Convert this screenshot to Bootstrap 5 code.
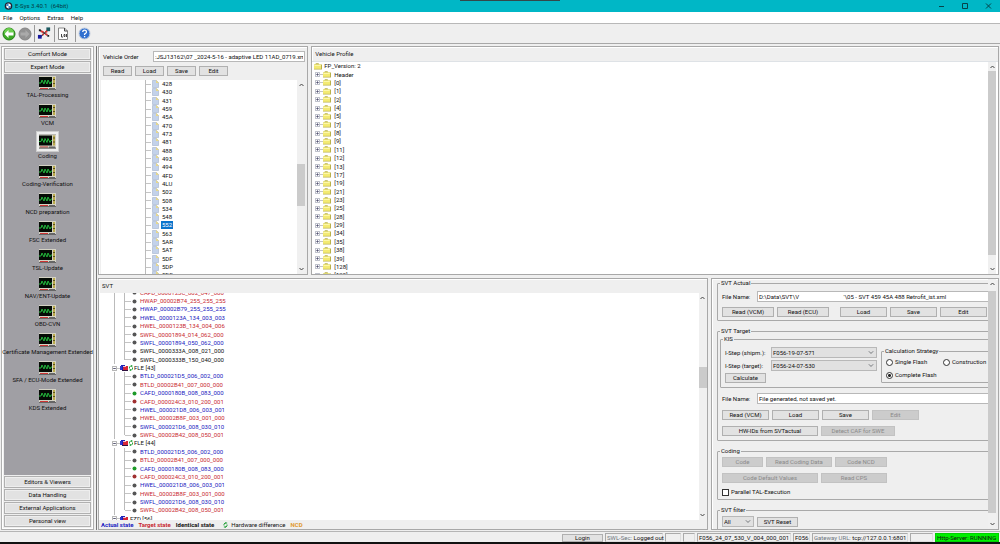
<!DOCTYPE html>
<html lang="en">
<head>
<meta charset="utf-8">
<meta name="viewport" content="width=device-width, initial-scale=1">
<title>E-Sys 3.40.1 (64bit)</title>
<link href="https://cdn.jsdelivr.net/npm/bootstrap@5.3.0/dist/css/bootstrap.min.css" rel="stylesheet">
<style>
body{font:6px/8px Roboto,"Noto Sans",sans-serif;color:#111;background:#efefef;height:100vh;overflow:hidden}
svg{display:block;flex:none}
.titlebar{background:#00b7c6;height:12px;color:#053a40}
.tab-top{height:1px;width:100px;background:#33484a;left:46%;top:0}
.menus{height:11px;background:#fff;gap:7px;padding-left:3px}
.menus a{color:#111;text-decoration:none}
.tools{height:21px;border-top:1px solid #b8b8b8;border-bottom:1px solid #a8a8a8;padding-left:2px;gap:2px}
.tools button{border:0;background:none;padding:0}
.tools .rule{width:1px;height:17px;background:#999}
.work{padding:2px 1px 1px}
.side{flex:0 0 93px;min-width:0;border:1px solid #b0b0b0;background:#efefef;padding:1px 2px;box-shadow:inset 0 0 0 1px #fff;margin-right:2px}
.side .modes{gap:1px;padding-bottom:1px}
.side .modes.low{padding-top:1px}
.side .pool{background:#a09fa4;padding-top:2px}
.tool-item{border:0;background:none;padding:0 0 5px;display:flex;flex-direction:column;align-items:center;white-space:nowrap;color:#111;line-height:8px;flex:none}
.tool-item svg{margin-bottom:1px}
.tool-item.on svg{border:2px solid #eee;outline:1px solid #ccc;background:#a09fa4;padding:0;width:21px;height:19px}
.btn.key{--bs-btn-padding-x:0;--bs-btn-padding-y:0;--bs-btn-font-size:6px;--bs-btn-line-height:8px;--bs-btn-border-radius:0;--bs-btn-bg:#e2e2e2;--bs-btn-border-color:#b0b0b0;--bs-btn-color:#111;--bs-btn-disabled-bg:#ccc;--bs-btn-disabled-border-color:#c2c2c2;--bs-btn-disabled-color:#8a8a8a;--bs-btn-disabled-opacity:1;height:10px;flex:none;white-space:nowrap}
.side .key{height:12px;box-shadow:inset 0 0 0 1px #eee}
.w-s{width:29px}.w-m{width:41px}.w-l{width:47px}.w-xl{width:52px}.w-2{width:66px}.w-3{width:74px}.w-4{width:96px}
.panes{gap:3px;border-left:1px solid #777;padding-left:1px}
.pane{border:1px solid #a8a8a8;box-shadow:inset 1px 1px #fff;min-width:0;overflow:hidden}
.row-top{flex:229 1 0}.row-low{flex:251 1 0}
.order{flex:209 1 0}.profile{flex:688 1 0}.svt{flex:610 1 0}.ctl{flex:287 1 0}
.cap{height:14px;padding:3px 3px 0}
.sheet{background:#fff;min-height:0}
.rows{display:grid;grid-auto-rows:1fr;min-width:0}
.clip{overflow:hidden;min-width:0;background:#fff}
.order .rows{height:calc(100% + 5px)}
.profile .rows{height:calc(100% + 5px)}
.svt .rows{height:calc(100% + 8px);margin-top:-5px}
.node{display:flex;align-items:center;min-height:0;height:100%;white-space:pre;line-height:8px}
.vline{width:1px;align-self:stretch;background:#bbb;flex:none}
.vline.end{height:50%;align-self:flex-start}
.hline{height:1px;background:#c4c4c4;flex:none}
.pick{background:#0a74cc;color:#fff;padding:0 1px;margin-left:-1px}
.sb{flex:0 0 8px;background:#f0f0f0;display:flex;flex-direction:column;padding:3px 0}
.profile .sb,.ctl .sb{margin-right:2px}
.sb svg{margin:0 auto}
.sb i{display:block;flex-basis:0}
.sb .thumb{background:#cbcbcb}
.form-control.box,.form-select.box{font-size:6px;line-height:8px;height:11px;min-height:0;padding:0 1px;border:1px solid #b8b8b8;border-radius:0;color:#111;min-width:0}
.form-select.box{background-color:#e1e1e1;background-size:6px 5px;background-position:right 2px center;padding-right:10px}
fieldset.grp{border:1px solid #a9a9a9;border-radius:1px;padding:0 4px}
fieldset.grp>legend{float:none;width:auto;margin:0 0 0 -2px;padding:0 1px;font-size:6px;line-height:8px}
.scroll{flex:1 1 0;min-width:0;overflow:hidden;padding-left:5px}
.groups{width:calc(100% + 12px);display:flex;flex-direction:column;gap:6px}
.line{display:flex;align-items:center;white-space:nowrap}
.lab{flex:0 0 35px}.lab-i{flex:0 0 46px}
.form-check-input.tick{width:7px;height:7px;margin:0 2px 0 0;border:1px solid #333;flex:none;background-image:none}
.form-check-input.tick[type=checkbox]{border-radius:0}
.form-check-input.tick:checked{background:#fff radial-gradient(circle,#222 0 1px,#fff 2px);border-color:#333}
.gap3{gap:3px}
.mt5{margin-top:5px}.mt6{margin-top:6px}
.calc{flex:1}
.legend-bar{height:9px;gap:5px;padding:0 2px;line-height:9px;background:#efefef}
.blue{color:#2020c0}.red{color:#c82830}
.status{height:11px;border-top:1px solid #b5b5b5;gap:2px;padding:1px 1px 0 0;line-height:8px;white-space:nowrap}
.cell{border:1px solid #aaa;border-right-color:#ddd;border-bottom-color:#ddd;padding:0 1px;height:9px;line-height:8px}
.status .key{height:8px;--bs-btn-line-height:6px}
.run{background:#00f000;border-color:#00d000}
.edge{height:2px;background:#111}
</style>
</head>
<body class="d-flex flex-column">
<svg width="0" height="0" class="position-absolute" aria-hidden="true">
<symbol id="scope" viewBox="0 0 17 14"><path fill="#d4d2c4" d="M0 0h17v14H0z"/><path fill="#050b05" d="M0 1h13v10H0z"/><path fill="#b9aa4c" d="M14 1h2v10h-2z"/><path fill="#5a5220" d="M14 3h2v1h-2zm0 4h2v1h-2z"/><path d="M0 7h2l1-3 2 4 1-4 2 4 1-4 2 4 1-2h1" fill="none" stroke="#23b43b"/><path fill="#c33" d="M1 12h8v1H1z"/><path fill="#666" d="M10 12h6v1h-6zM0 13h17v1H0z"/></symbol>
<symbol id="doc" viewBox="0 0 7 8"><path fill="#c3d2ea" stroke="#a3b2cb" stroke-width=".6" d="M.5.5h4l2 2v5h-6z"/><path fill="#e8d888" d="M4 0l3 3H4z"/></symbol>
<symbol id="folder" viewBox="0 0 8 7"><path fill="#b9b04a" d="M0 1.5h1L2 .3h2.500l.8 1.200H8v5H0z"/><path fill="#f3ea72" d="M0 1.500h7v4.300H0z"/><path fill="#fffbb8" d="M.5 1.800h6.200v1H.5z"/></symbol>
<symbol id="plus" viewBox="0 0 5 5"><path fill="#fff" stroke="#a4aab8" stroke-width=".8" d="M.4.4h4.200v4.200H.4z"/><path stroke="#446" stroke-width=".7" d="M1.200 2.500h2.600M2.500 1.200v2.600"/></symbol>
<symbol id="minus" viewBox="0 0 5 5"><path fill="#fff" stroke="#999" stroke-width=".8" d="M.4.4h4.200v4.200H.4z"/><path stroke="#335" stroke-width=".8" d="M1.200 2.500h2.600"/></symbol>
<symbol id="swap" viewBox="0 0 4 6"><path d="M.5 3.500V2L1.500 1H2.500M3.500 2.500V4L2.500 5h-1" fill="none" stroke="#2aa33e"/><path fill="#159a2c" d="M2 0l2 1-2 1zM2 4L0 5l2 1z"/></symbol>
<symbol id="ecu" viewBox="0 0 9 6"><path fill="#1c22b8" d="M1 0h4v5H1z"/><path fill="#3038d0" d="M0 1h2v4H0z"/><path fill="#d82838" d="M4 1h4v4H3V3z"/><path fill="#f2c6cc" d="M3 1h3v1H3z"/><path fill="#301040" d="M2 5h6v1H2z"/></symbol>
<symbol id="up" viewBox="0 0 5 4"><path d="M.5 3l2-2 2 2" fill="none" stroke="#444"/></symbol>
<symbol id="down" viewBox="0 0 5 4"><path d="M.5 1l2 2 2-2" fill="none" stroke="#444"/></symbol>
</svg>

<header class="titlebar d-flex align-items-center position-relative flex-shrink-0">
<div class="tab-top position-absolute"></div>
<svg class="ms-1" width="9" height="8" viewBox="0 0 9 8"><circle cx="4.500" cy="4" r="3.800" fill="#223"/><circle cx="4.500" cy="4" r="2.400" fill="#fff"/><path fill="#3987c8" d="M4.500 1.600A2.400 2.400 0 0 0 2.100 4h2.400zM4.500 4v2.400A2.400 2.400 0 0 0 6.900 4z"/></svg>
<span style="white-space:pre;padding-left:2px">E-Sys 3.40.1  (64bit)</span>
<svg class="ms-auto me-2" width="54" height="8" viewBox="0 0 54 8" fill="none" stroke="#06434a"><path d="M1 4.500h5M24.500 1.500h5v5h-5zM48 1.500l5 5m0-5l-5 5"/></svg>
</header>
<nav class="menus d-flex align-items-center flex-shrink-0"><a href="#">File</a><a href="#">Options</a><a href="#">Extras</a><a href="#">Help</a></nav>
<div class="tools d-flex align-items-center flex-shrink-0">
<button aria-label="Back"><svg width="14" height="14" viewBox="0 0 14 14"><circle cx="7" cy="7" r="6" fill="#3cab25" stroke="#247b16"/><path fill="#6bcf4e" d="M2 6a5 5 0 0 1 10 0z"/><path fill="#fff" d="M2.500 7l4-4v2.500h5v3h-5V11z"/></svg></button>
<button aria-label="Forward"><svg width="14" height="14" viewBox="0 0 14 14"><circle cx="7" cy="7" r="6" fill="#929292" stroke="#858585"/><path fill="#aaa" d="M11.500 7l-4-4v2.500h-5v3h5V11z"/></svg></button>
<span class="rule"></span>
<button aria-label="Connection"><svg width="15" height="15" viewBox="0 0 16 15"><path d="M3 12L12 3M3 4l8 5" stroke="#333" stroke-width="1.200"/><path fill="#16189c" d="M1 9h4v4H1z"/><path fill="#1b5960" d="M10 1h4v4h-4z"/><path d="M4 5l3 1M9 6l2-1M6 9l1-1M9 8l2 1" stroke="#d33" stroke-width="2" fill="none"/><path fill="#222" d="M2 3h2v2H2zm9 6h2v2h-2z"/></svg></button>
<span class="rule"></span>
<button aria-label="Log"><svg width="12" height="14" viewBox="0 0 12 14"><path d="M1.500 1h6l3 3v8.500h-9z" fill="#fff" stroke="#888"/><path d="M7.500 1v3h3M4.500 7v3h1.500M7 7.500h1v2H7zM9.500 7v3" fill="none" stroke="#444"/></svg></button>
<span class="rule ms-1"></span>
<button aria-label="Help"><svg width="13" height="13" viewBox="0 0 13 13"><circle cx="6.500" cy="6.500" r="5.500" fill="#2f6fd0" stroke="#c4cede"/><path d="M4.700 5q.1-1.800 1.900-1.800T8.500 5q0 1-1.900 2v1M6.600 9v1.300" fill="none" stroke="#fff" stroke-width="1.300"/></svg></button>
</div>

<main class="work d-flex flex-grow-1" style="min-height:0">
<aside class="side d-flex flex-column">
<div class="modes d-flex flex-column"><button class="btn key">Comfort Mode</button><button class="btn key">Expert Mode</button></div>
<div class="pool flex-grow-1 d-flex flex-column align-items-center" id="pool"></div>
<div class="modes low d-flex flex-column"><button class="btn key">Editors &amp; Viewers</button><button class="btn key">Data Handling</button><button class="btn key">External Applications</button><button class="btn key">Personal view</button></div>
</aside>

<div class="panes d-flex flex-column flex-grow-1" style="min-width:0">
<div class="row-top d-flex gap3" style="min-height:0">
<section class="pane order d-flex flex-column">
<div class="line ps-1 pt-1" style="padding-right:2px"><label for="vo" style="flex:0 0 50px">Vehicle Order</label><input id="vo" class="form-control box" value=":JSJ13162\07 _2024-5-16 - adaptive LED 11AD_0719.xml"></div>
<div class="line gap3 px-1 py-1"><button class="btn key w-s">Read</button><button class="btn key w-s">Load</button><button class="btn key w-s">Save</button><button class="btn key w-s">Edit</button></div>
<div class="sheet d-flex flex-grow-1" style="margin:0 2px"><div class="clip flex-grow-1"><div class="rows" id="orders"></div></div>
<div class="sb"><svg width="5" height="4"><use href="#up"/></svg><i style="flex-grow:76"></i><i class="thumb" style="flex-grow:42"></i><i style="flex-grow:61"></i><svg width="5" height="4"><use href="#down"/></svg></div></div>
</section>
<section class="pane profile d-flex flex-column">
<div class="cap">Vehicle Profile</div>
<div class="sheet d-flex flex-grow-1 border-top"><div class="clip flex-grow-1"><div class="rows" id="profiles"></div></div>
<div class="sb"><svg width="5" height="4"><use href="#up"/></svg><i style="flex-grow:2"></i><i class="thumb" style="flex-grow:184"></i><i style="flex-grow:12"></i><svg width="5" height="4"><use href="#down"/></svg></div></div>
</section>
</div>

<div class="row-low d-flex gap3" style="min-height:0">
<section class="pane svt d-flex flex-column">
<div class="cap">SVT</div>
<div class="sheet d-flex flex-grow-1"><div class="clip flex-grow-1"><div class="rows" id="svts"></div></div>
<div class="sb"><svg width="5" height="4"><use href="#up"/></svg><i style="flex-grow:66"></i><i class="thumb" style="flex-grow:21"></i><i style="flex-grow:125"></i><svg width="5" height="4"><use href="#down"/></svg></div></div>
<div class="legend-bar line"><b class="blue">Actual state</b><b class="red">Target state</b><b>Identical state</b><span class="line gap3 ps-1"><svg width="5" height="6"><use href="#swap"/></svg>Hardware difference</span><b style="color:#e09a30">NCD</b></div>
</section>

<section class="pane ctl d-flex">
<div class="scroll"><form class="groups">
<fieldset class="grp" style="padding-bottom:3px"><legend>SVT Actual</legend>
<div class="line mt-1"><label class="lab" for="fa">File Name:</label><input id="fa" class="form-control box" value="D:\Data\SVT\V                              '\05 - SVT 459 45A 488 Retrofit_ist.xml"></div>
<div class="line gap3 mt5"><button type="button" class="btn key w-xl">Read (VCM)</button><button type="button" class="btn key w-xl">Read (ECU)</button><button type="button" class="btn key w-l ms-2">Load</button><button type="button" class="btn key w-l">Save</button><button type="button" class="btn key w-l">Edit</button></div>
</fieldset>
<fieldset class="grp" style="padding-bottom:4px"><legend>SVT Target</legend>
<fieldset class="grp" style="margin-left:-2px"><legend>KIS</legend>
<div class="d-flex gap-1 py-1">
<div class="d-flex flex-column" style="flex:0 0 152px;gap:2px">
<div class="line"><label class="lab-i" for="s1">I-Step (shipm.):</label><select id="s1" class="form-select box"><option>F056-19-07-571</option></select></div>
<div class="line"><label class="lab-i" for="s2">I-Step (target):</label><select id="s2" class="form-select box"><option>F056-24-07-530</option></select></div>
<button type="button" class="btn key w-m">Calculate</button>
</div>
<fieldset class="grp calc"><legend>Calculation Strategy</legend>
<div class="line" style="margin-top:3px"><div class="line" style="flex:0 0 57px"><input class="form-check-input tick" type="radio" name="c" id="r1"><label for="r1">Single Flash</label></div><input class="form-check-input tick" type="radio" name="c" id="r2"><label for="r2">Construction</label></div>
<div class="line mt5"><input class="form-check-input tick" type="radio" name="c" id="r3" checked><label for="r3">Complete Flash</label></div>
</fieldset>
</div>
</fieldset>
<div class="line mt5"><label class="lab" for="ft">File Name:</label><input id="ft" class="form-control box" value="File generated, not saved yet."></div>
<div class="line gap3 mt6"><button type="button" class="btn key w-l">Read (VCM)</button><button type="button" class="btn key w-l">Load</button><button type="button" class="btn key w-l">Save</button><button type="button" class="btn key w-l" disabled>Edit</button></div>
<div class="line gap3 mt6"><button type="button" class="btn key w-4">HW-IDs from SVTactual</button><button type="button" class="btn key w-3" disabled>Detect CAF for SWE</button></div>
</fieldset>
<fieldset class="grp" style="padding-bottom:3px"><legend>Coding</legend>
<div class="line gap3" style="margin-top:2px"><button type="button" class="btn key w-m" disabled>Code</button><button type="button" class="btn key w-2" disabled>Read Coding Data</button><button type="button" class="btn key w-xl" disabled>Code NCD</button></div>
<div class="line gap3 mt6"><button type="button" class="btn key w-4" disabled>Code Default Values</button><button type="button" class="btn key w-2" disabled>Read CPS</button></div>
<div class="line mt5"><input class="form-check-input tick" type="checkbox" id="p"><label for="p">Parallel TAL-Execution</label></div>
</fieldset>
<fieldset class="grp pb-2"><legend>SVT filter</legend>
<div class="line gap3" style="margin-top:2px"><select class="form-select box" style="width:32px" aria-label="SVT filter"><option>All</option></select><button type="button" class="btn key w-m">SVT Reset</button></div>
</fieldset>
</form></div>
<div class="sb"><svg width="5" height="4"><use href="#up"/></svg><i style="flex-grow:4"></i><i class="thumb" style="flex-grow:214"></i><i style="flex-grow:9"></i><svg width="5" height="4"><use href="#down"/></svg></div>
</section>
</div>
</div>
</main>

<footer class="status line flex-shrink-0 justify-content-end">
<button class="btn key w-m">Login</button>
<span class="cell" style="width:58px"><span class="text-secondary">SWL-Sec:</span> Logged out</span><span class="cell" style="width:16px"></span><span class="cell" style="width:12px"></span>
<span class="cell" style="width:94px">F056_24_07_530_V_004_000_001</span><span class="cell" style="width:17px">F056</span><span class="cell" style="width:96px"><span class="text-secondary">Gateway URL:</span> tcp://127.0.0.1:6801</span><span class="cell" style="width:23px"></span><span class="cell run" style="width:64px">Http-Server: <span>RUNNING</span></span>
</footer>
<div class="edge flex-shrink-0"></div>

<script>
const ic=(n,w,h)=>`<svg width="${w}" height="${h}"><use href="#${n}"/></svg>`;
const sp=w=>`<span style="flex:0 0 ${w}px"></span>`;
const hl=w=>`<span class="hline" style="width:${w}px"></span>`;
const put=(id,h)=>document.getElementById(id).innerHTML=h;

// Expert mode tools
put('pool','TAL-Processing,VCM,Coding,Coding-Verification,NCD preparation,FSC Extended,TSL-Update,NAV/ENT-Update,OBD-CVN,Certificate Management Extended,SFA / ECU-Mode Extended,KDS Extended'.split(',')
.map(t=>`<button class="tool-item${t=='Coding'?' on':''}">${ic('scope',17,14)}${t}</button>`).join(''));

// Vehicle order options
put('orders','428,430,431,459,45A,470,473,481,488,493,494,4FD,4LU,502,508,534,548,552,563,5AR,5AT,5DF,5DP,5DS'.split(',')
.map(t=>`<div class="node">${sp(44)}<span class="vline"></span>${hl(5)}${sp(1)}${ic('doc',7,8)}${sp(3)}<span class="${t=='552'?'pick':''}">${t}</span></div>`).join(''));

// Vehicle profile groups
put('profiles',`<div class="node">${sp(2)}${ic('folder',8,7)}${sp(2)}FP_Version: 2</div>`+
'Header,[0],[1],[2],[4],[5],[7],[8],[9],[11],[12],[13],[17],[19],[21],[23],[25],[28],[29],[34],[35],[38],[39],[128],[129]'.split(',')
.map(t=>`<div class="node">${sp(3)}${ic('plus',5,5)}${hl(3)}${ic('folder',8,7)}${sp(3)}${t}</div>`).join(''));

// SVT: b actual, r target, k identical; g and d mark coding data
const ecu=['b BTLD_000021D5_006_002_000','r BTLD_00002B41_007_000_000','bg CAFD_0000180B_008_083_000','rd CAFD_000024C3_010_200_001','b HWEL_000021D8_006_003_001','r HWEL_00002B8F_003_001_000','b SWFL_000021D6_008_030_010','r SWFL_00002B42_008_050_001'];
const all=['r CAFD_0000123C_002_047_000','r HWAP_00002B74_255_255_255','b HWAP_00002B79_255_255_255','b HWEL_0000123A_134_003_003','r HWEL_0000123B_134_004_006','r SWFL_00001894_014_062_000','b SWFL_00001894_050_062_000','k SWFL_0000333A_008_021_000','k SWFL_0000333B_150_040_000','FLE [43]',...ecu,'FLE [44]',...ecu,'FZD [56]'];
put('svts',all.map((s,i)=>{
 if(/\[/.test(s)) return `<div class="node">${sp(13)}${ic('minus',5,5)}${hl(3)}${ic('ecu',9,6)}${s[1]=='L'?ic('swap',4,6):''}${sp(1)}${s}</div>`;
 const [k,t]=s.split(' '),last=/\[/.test(all[i+1]);
 const c={g:'#1d9a28',d:'#a03030'}[k[1]]||'#555';
 return `<div class="node ${k[0]=='b'?'blue':k[0]=='r'?'red':''}">${sp(15)}<span class="vline"></span>${sp(9)}<span class="vline${last?' end':''}"></span>${hl(6)}${sp(1)}<svg width="5" height="5"><circle cx="2.5" cy="2.5" r="2" fill="${c}"/></svg>${sp(3)}${t}</div>`;
}).join(''));
</script>
<script src="https://cdn.jsdelivr.net/npm/bootstrap@5.3.0/dist/js/bootstrap.bundle.min.js"></script>
</body>
</html>
